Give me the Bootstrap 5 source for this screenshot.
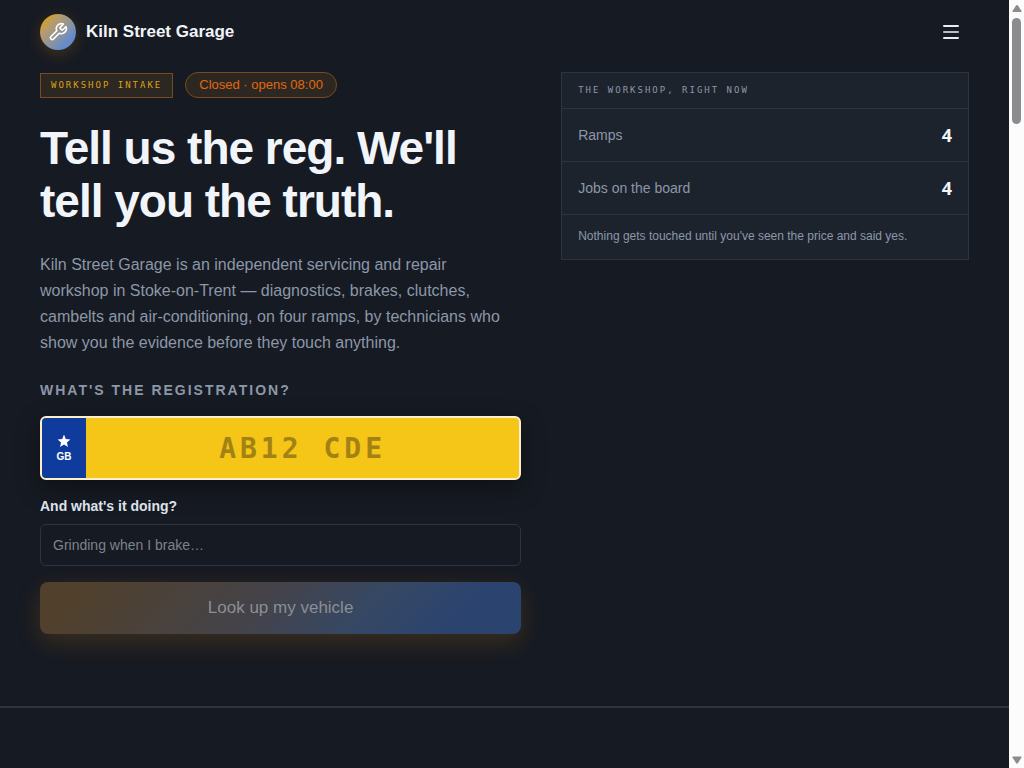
<!doctype html>
<html lang="en">
<head>
<meta charset="utf-8">
<meta name="viewport" content="width=device-width, initial-scale=1">
<title>Kiln Street Garage</title>
<link href="https://cdn.jsdelivr.net/npm/bootstrap@5.3.0/dist/css/bootstrap.min.css" rel="stylesheet">
<style>
  :root {
    --ink: #161a22;
    --panel: #1d232d;
    --line: #2d333f;
    --muted: #8c97a8;
    --bright: #f1f4f8;
  }
  body {
    background: var(--ink);
    color: var(--muted);
    font-family: "Liberation Sans", Arial, sans-serif;
    font-size: 14px;
    line-height: 20px;
  }
  .mono { font-family: "DejaVu Sans Mono", monospace; }
  .gutter { padding-left: 40px; padding-right: 40px; }

  .topbar { height: 64px; }
  .brand { color: var(--bright); font-size: 17px; font-weight: 700; gap: 10px; }
  .brand:hover { color: var(--bright); }
  .brand-mark {
    width: 36px; height: 36px; color: #fff;
    background: linear-gradient(135deg, #dca30c 8%, #b89b6c 30%, #8e9499 55%, #688cc9 75%, #5b84cf);
    box-shadow: 0 4px 16px rgba(224, 140, 20, .22);
  }
  .menu-btn { width: 36px; height: 36px; }

  .hero { display: grid; grid-template-columns: 118fr 100fr; gap: 40px; padding-top: 8px; padding-bottom: 72px; }
  .tag-row { gap: 12px; }
  .intake-tag, .status-pill { border: 1px solid #7b4a1e; background: #2d2722; }
  .intake-tag {
    color: #dba117; font-size: 9px; letter-spacing: 2px;
    line-height: 23px; padding: 0 10px;
  }
  .status-pill { color: #e2680f; font-size: 13px; line-height: 24px; padding: 0 13px; }
  .headline {
    color: var(--bright); font-size: 46px; line-height: 53px; font-weight: 700;
    letter-spacing: -1px; margin: 24px 0;
  }
  .intro { font-size: 16px; line-height: 26px; max-width: 476px; margin-bottom: 24px; }
  .reg-label { font-weight: 700; letter-spacing: 2px; line-height: 20px; margin-bottom: 16px; }

  .plate {
    height: 64px; border: 2px solid #fbeecb; border-radius: 6px; background: #f5c518;
    box-shadow: 0 8px 24px rgba(0, 0, 0, .36);
  }
  .plate-band { width: 44px; background: #0e3b9c; color: #fff; font-size: 10px; font-weight: 700; line-height: 12px; gap: 3px; }
  .plate-input {
    min-width: 0; border: 0; background: transparent; color: #1b1600; text-align: center;
    font-size: 28px; font-weight: 700; letter-spacing: 4px; outline: 0;
  }
  .plate-input::placeholder { color: #a38214; opacity: 1; }

  .symptom-label { color: #dde2ea; font-weight: 700; margin: 16px 0 8px; }
  .symptom.form-control {
    height: 42px; padding: 0 12px; font-size: 14px; color: var(--bright);
    background: var(--ink); border: 1px solid var(--line); border-radius: 6px;
  }
  .symptom.form-control::placeholder { color: #7c838f; opacity: 1; }
  .lookup.btn {
    height: 52px; margin-top: 16px; border: 0; border-radius: 8px; opacity: 1;
    color: #8b8e94; font-size: 17px;
    background: linear-gradient(135deg, #51402b 8%, #44434a 46%, #364863 66%, #2b436f 85%);
    box-shadow: 0 8px 24px rgba(224, 140, 20, .19);
  }

  .board { background: var(--panel); border: 1px solid var(--line); }
  .board > * + * { border-top: 1px solid var(--line); }
  .board-head { font-size: 9px; font-weight: 400; letter-spacing: 2px; line-height: 35px; padding: 0 16px; margin: 0; }
  .board-row { height: 53px; padding: 0 16px; }
  .board-count { color: var(--bright); font: 700 18px/20px "Noto Sans", sans-serif; }
  .board-note { font-size: 12px; line-height: 20px; padding: 11px 16px 13px; margin: 0; }

  .next-band { border-top: 2px solid var(--line); }
  .scroll-rail { width: 15px; height: 100vh; top: 0; background: #fcfcfc; padding: 5px 0 4px; color: #8b8c8d; }
  .scroll-thumb { width: 9px; height: 106px; border-radius: 5px; background: currentColor; margin-top: 5px; }
</style>
</head>
<body>
<div class="d-flex min-vh-100">
  <div class="flex-grow-1 d-flex flex-column">
    <header class="topbar gutter d-flex align-items-center justify-content-between">
      <a href="#" class="brand d-flex align-items-center text-decoration-none">
        <span class="brand-mark rounded-circle d-flex align-items-center justify-content-center">
          <svg width="20" height="20" viewBox="0 0 24 24" fill="none" stroke="currentColor" stroke-width="2" stroke-linecap="round" stroke-linejoin="round" aria-hidden="true"><path d="M14.7 6.3a1 1 0 0 0 0 1.4l1.6 1.6a1 1 0 0 0 1.4 0l3.77-3.77a6 6 0 0 1-7.94 7.94l-6.91 6.91a2.12 2.12 0 0 1-3-3l6.91-6.91a6 6 0 0 1 7.94-7.94l-3.76 3.76z"/></svg>
        </span>
        Kiln Street Garage
      </a>
      <button type="button" class="menu-btn btn p-0 border-0 d-flex align-items-center justify-content-center" aria-label="Menu">
        <svg width="16" height="16" viewBox="0 0 16 16" fill="none" stroke-width="2" stroke-linecap="round" aria-hidden="true"><path stroke="#e9edf1" d="M1 2H15M1 14H15"/><path stroke="#b9bec4" d="M1 8H15"/></svg>
      </button>
    </header>

    <main class="flex-grow-1 d-flex flex-column">
      <section class="hero gutter">
        <div>
          <div class="tag-row d-flex align-items-center">
            <span class="intake-tag mono">WORKSHOP INTAKE</span>
            <span class="status-pill rounded-pill">Closed · opens 08:00</span>
          </div>
          <h1 class="headline">Tell us the reg. We'll tell you the truth.</h1>
          <p class="intro">Kiln Street Garage is an independent servicing and repair workshop in Stoke-on-Trent — diagnostics, brakes, clutches, cambelts and air-conditioning, on four ramps, by technicians who show you the evidence before they touch anything.</p>
          <form>
            <label for="reg" class="reg-label d-block">WHAT'S THE REGISTRATION?</label>
            <div class="plate d-flex overflow-hidden">
              <span class="plate-band d-flex flex-column align-items-center justify-content-center">
                <svg width="14" height="14" viewBox="0 0 24 24" fill="currentColor" aria-hidden="true"><path d="M12 1l3.100 7.700 7.900.7-6 5.200 1.800 7.700L12 18.200l-6.800 4.100L7 14.600 1 9.400l7.900-.7z"/></svg>
                GB
              </span>
              <input id="reg" type="text" class="plate-input mono flex-grow-1" placeholder="AB12 CDE">
            </div>
            <label for="symptom" class="symptom-label d-block">And what's it doing?</label>
            <input id="symptom" type="text" class="symptom form-control" placeholder="Grinding when I brake…">
            <button type="submit" class="lookup btn w-100" disabled>Look up my vehicle</button>
          </form>
        </div>

        <aside>
          <div class="board">
            <h2 class="board-head mono">THE WORKSHOP, RIGHT NOW</h2>
            <div class="board-row d-flex align-items-center justify-content-between">
              <span>Ramps</span><span class="board-count">4</span>
            </div>
            <div class="board-row d-flex align-items-center justify-content-between">
              <span>Jobs on the board</span><span class="board-count">4</span>
            </div>
            <p class="board-note">Nothing gets touched until you've seen the price and said yes.</p>
          </div>
        </aside>
      </section>
      <section class="next-band flex-grow-1"></section>
    </main>
  </div>

  <div class="scroll-rail sticky-top flex-shrink-0 d-flex flex-column align-items-center" aria-hidden="true">
    <svg width="10" height="8" viewBox="0 0 10 8" fill="currentColor"><path d="M5 0c.5 0 .8.3 1 .6L9.500 6c.3.500 0 1-.5 1H1C.5 7 .2 6.500.5 6L4 .6C4.200.3 4.500 0 5 0z"/></svg>
    <div class="scroll-thumb"></div>
    <svg class="mt-auto" width="10" height="8" viewBox="0 0 10 8" fill="currentColor"><path d="M5 7.500c.5 0 .8-.3 1-.6l3.500-5.400c.3-.5 0-1-.5-1H1c-.5 0-.8.5-.5 1L4 6.900c.2.3.5.6 1 .6z"/></svg>
  </div>
</div>
<script src="https://cdn.jsdelivr.net/npm/bootstrap@5.3.0/dist/js/bootstrap.bundle.min.js"></script>
</body>
</html>
